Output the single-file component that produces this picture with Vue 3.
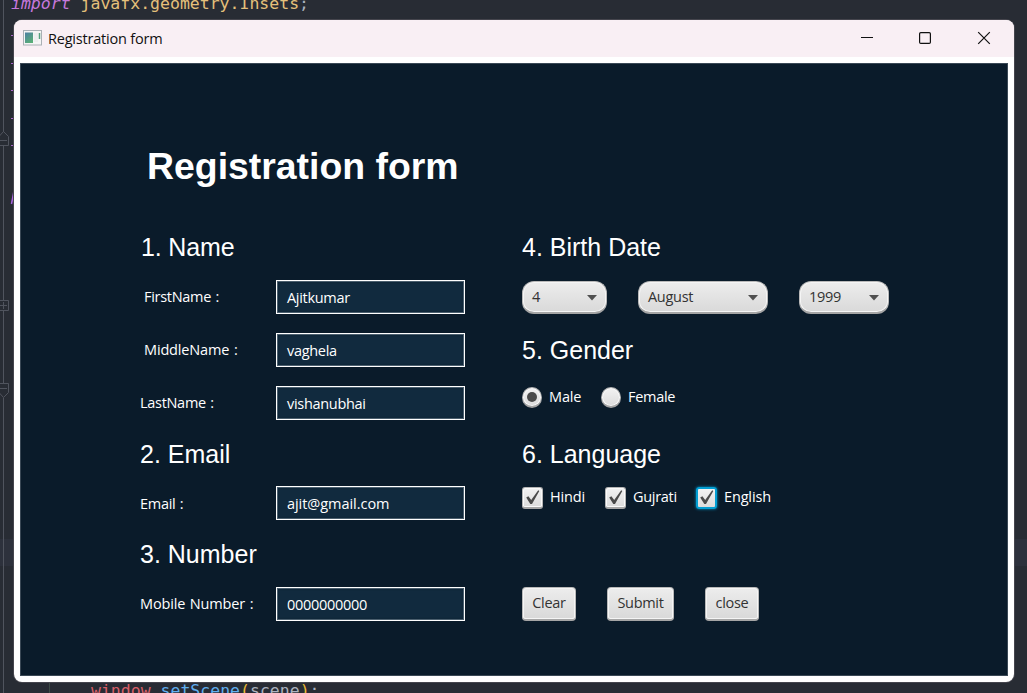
<script setup>
const fields = [
  { label: 'FirstName :', value: 'Ajitkumar', cls: 'first' },
  { label: 'MiddleName :', value: 'vaghela', cls: 'middle' },
  { label: 'LastName :', value: 'vishanubhai', cls: 'last' },
]
const dates = [
  { value: '4', cls: 'day' },
  { value: 'August', cls: 'month' },
  { value: '1999', cls: 'year' },
]
const languages = [
  { name: 'Hindi', cls: 'hindi' },
  { name: 'Gujrati', cls: 'gujrati' },
  { name: 'English', cls: 'english' },
]
const buttons = [
  { name: 'Clear', cls: 'clear' },
  { name: 'Submit', cls: 'submit' },
  { name: 'close', cls: 'close' },
]
</script>

<template>
  <div class="editor">
    <div class="caret-line"></div>
    <svg class="gutter" width="60" height="693" viewBox="0 0 60 693" fill="none">
      <path d="M3.5 0V132M3.5 146V300M3.5 311V383M3.5 398V693" stroke="#50545e" />
      <path d="M-1 136.500L3.500 131.500L8.500 136.500V145.500H-1M0 140.500H7" stroke="#50545e" />
      <path d="M-1 300.500H8.500V310.500H-1M0 305.500H7M3.500 302V309" stroke="#50545e" />
      <path d="M-1 383.500H8.500V392.500L3.500 397.500L-1 392.500M0 388.500H7" stroke="#50545e" />
      <path d="M49.500 683V693" stroke="#3d4a46" />
      <path d="M11 35.500H14M11 63.500H14M11 90.500H14M11 118.500H14M11 145.500H14" stroke="#a966c9" />
      <path d="M13 28.500H14M13 55.500H14M13 83.500H14M13 110.500H14M13 138.500H14" stroke="#75508c" />
      <path d="M11.500 204L13.800 192" stroke="#a966e0" stroke-width="1.500" />
    </svg>
    <div class="code top"><i>import</i> <span class="pkg">javafx.geometry.Insets</span>;</div>
    <div class="code bottom"><span class="obj">window</span>.<span class="fn">setScene</span><span class="paren">(</span>scene<span class="paren">)</span>;</div>

    <div class="window">
      <header class="titlebar">
        <svg class="appicon" width="19" height="16" viewBox="0 0 19 16">
          <defs>
            <linearGradient id="pane" x1="0" y1="0" x2="0.600" y2="1">
              <stop offset="0" stop-color="#4d7fa3" /><stop offset="1" stop-color="#58ad78" />
            </linearGradient>
          </defs>
          <rect x=".5" y=".5" width="18" height="14.500" fill="#f5f5f5" stroke="#aab0b5" />
          <rect x="2" y="2.500" width="8" height="10.500" fill="url(#pane)" />
          <path d="M12 3V12M14 3V12" stroke="#e4e9e9" />
          <path d="M16.500 3V9" stroke="#55a17f" stroke-width="1.500" />
        </svg>
        <span class="caption">Registration form</span>
        <svg class="controls" width="140" height="20" viewBox="0 0 140 20" fill="none" stroke="#111">
          <path d="M7 9.500H19" />
          <rect x="65.600" y="4.600" width="10.800" height="10.800" rx="1.200" stroke-width="1.200" />
          <path d="M124.200 4.200L135.800 15.800M135.800 4.200L124.200 15.800" stroke-width="1.200" />
        </svg>
      </header>

      <main class="scene">
        <h1>Registration form</h1>
        <div class="columns">
          <section class="left">
            <h2 class="nudge">1. Name</h2>
            <div v-for="f in fields" :key="f.label" class="row">
              <label :class="f.cls">{{ f.label }}</label>
              <div class="input">{{ f.value }}</div>
            </div>
            <h2>2. Email</h2>
            <div class="row">
              <label class="mail">Email :</label>
              <div class="input address">ajit@gmail.com</div>
            </div>
            <h2>3. Number</h2>
            <div class="row">
              <label class="mobile">Mobile Number :</label>
              <div class="input">0000000000</div>
            </div>
          </section>

          <section class="right">
            <h2>4. Birth Date</h2>
            <div class="combos">
              <div v-for="d in dates" :key="d.cls" class="combo" :class="d.cls">
                <span>{{ d.value }}</span>
                <svg width="10" height="6" viewBox="0 0 10 6"><path d="M0 0H10L5 5.500Z" fill="#505050" /></svg>
              </div>
            </div>
            <h2>5. Gender</h2>
            <div class="options">
              <span class="radio on"></span><span class="text male">Male</span>
              <span class="radio"></span><span class="text female">Female</span>
            </div>
            <h2>6. Language</h2>
            <div class="options">
              <template v-for="l in languages" :key="l.name">
                <span class="check" :class="{ focus: l.name === 'English' }">
                  <svg width="16" height="16" viewBox="0 0 16 16"><path d="M1.200 8.400L3.400 7.200L6.200 11L13.200 1.300L14.300 1.900L7 15H5.300Z" fill="#4a4a4a" /></svg>
                </span>
                <span class="text" :class="l.cls">{{ l.name }}</span>
              </template>
            </div>
            <div class="actions">
              <button v-for="b in buttons" :key="b.name" :class="b.cls">{{ b.name }}</button>
            </div>
          </section>
        </div>
      </main>
    </div>
  </div>
</template>

<style>
body { overflow: hidden; background: #282c34; }
</style>

<style scoped>
* { box-sizing: border-box; }
.editor {
  position: relative; width: 1027px; height: 693px; overflow: hidden; background: #282c34;
  font-family: "Open Sans", "Noto Sans", sans-serif; font-size: 14.5px; letter-spacing: -0.3px;
}
.caret-line { position: absolute; left: 0; right: 0; top: 539px; height: 27px; background: #2d313c; }
.gutter { position: absolute; left: 0; top: 0; }
.code {
  position: absolute; white-space: pre; color: #abb2bf; letter-spacing: 0;
  font: 16.5px/20px "DejaVu Sans Mono", monospace;
}
.code i { color: #c678dd; }
.top { left: 11px; top: -6px; }
.bottom { left: 91px; top: 681px; }
.pkg { color: #e5c07b; }
.obj { color: #d85f68; }
.fn { color: #61afef; }
.paren { color: #e8ba36; }
.window {
  position: absolute; left: 14px; top: 20px; width: 1000px; height: 662px;
  display: flex; flex-direction: column; overflow: hidden;
  background: #fff; border-radius: 8px; box-shadow: 0 0 0 1px #45454d;
}
.titlebar { display: flex; align-items: center; height: 37px; padding: 0 20px 0 9px; background: #f9eff4; color: #111; }
.appicon { margin-top: -2px; }
.caption { margin: 0 auto 0 6px; letter-spacing: -0.2px; }
.controls { display: block; margin-top: -2px; }
.scene {
  flex: 1; margin: 6px; padding: 76px 0 0 119px; color: #fff;
  background: #0a1b2a; border: 1px solid #3a4855;
}
h1, h2 { margin: 0; font-family: "Liberation Sans", Arial, sans-serif; letter-spacing: 0; white-space: nowrap; }
h1 { height: 90px; padding-left: 7px; font-size: 37.4px; line-height: 52px; }
h2 { font-size: 25px; font-weight: 400; line-height: 34px; height: 34px; }
.nudge { padding-left: 1px; letter-spacing: -0.15px; }
.columns { display: grid; grid-template-columns: 382px 400px; }
.left { display: grid; grid-template-rows: 50px 53px 53px 51px 49px 51px 50px 34px; align-items: start; }
.right { display: grid; grid-template-rows: 50px 53px 47px 57px 43px 107px 34px; align-items: start; }
.row { display: grid; grid-template-columns: 136px 189px; height: 34px; align-items: center; }
label { padding-bottom: 2px; word-spacing: 1px; }
label.first, label.middle { padding-left: 4px; }
label.middle { letter-spacing: -0.15px; }
label.mail { padding-bottom: 0; }
label.mobile { letter-spacing: -0.15px; }
.input {
  height: 34px; padding: 0 10px; line-height: 34px; background: #112a3e;
  border: 1px solid #fff; box-shadow: inset 0 0 0 1px #4b5f6e, inset 0 0 3px #0a1b2a;
}
.address { letter-spacing: -0.05px; }
.combos, .actions { display: flex; gap: 31px; height: 34px; }
.combo, .actions button {
  height: 34px; color: #333; border: 1px solid #b9b9b9; border-bottom: 2px solid #a5a5a5;
  background: linear-gradient(#ededed, #d9d9d9); box-shadow: inset 0 0 0 1px #f5f5f5;
}
.combo { display: flex; align-items: center; justify-content: space-between; padding: 0 9px; border-radius: 12px; height: 33px; margin-top: 1px; }
.combo span { padding-bottom: 2px; }
.combo svg { margin-top: 2px; }
.day { width: 85px; }
.month { width: 130px; }
.year { width: 90px; }
.actions button { padding: 0 0 2px; border-radius: 4px; font: inherit; letter-spacing: inherit; }
.actions .clear, .actions .close { width: 54px; }
.actions .submit { width: 67px; }
.options { display: flex; align-items: center; height: 34px; }
.radio, .check { display: flex; align-items: center; justify-content: center; border: 1px solid #b5b5b5; border-bottom: 2px solid #a5a5a5; background: linear-gradient(#f2f2f2, #dcdcdc); box-shadow: inset 0 0 0 1px #fafafa; }
.radio { width: 20px; height: 21px; border-radius: 50%; margin-top: 1px; }
.radio.on::after { content: ""; width: 10px; height: 10px; border-radius: 50%; background: #4b4b4b; }
.check { width: 21px; height: 22px; border-radius: 3px; margin-top: 1px; }
.check svg { flex: none; }
.check.focus { border: 2px solid #039ed3; box-shadow: 0 0 3px #039ed3; }
.check.focus svg { margin-top: -1px; }
.text { padding: 0 0 2px 7px; white-space: nowrap; }
.male { width: 59px; }
.hindi { width: 62px; }
.gujrati { width: 70px; }
.male, .hindi, .english { letter-spacing: -0.15px; }
</style>
